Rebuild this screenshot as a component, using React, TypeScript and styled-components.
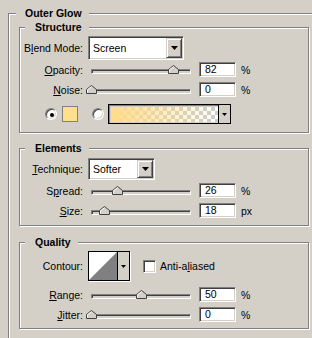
import React from 'react';
import styled, { createGlobalStyle } from 'styled-components';

const Global = createGlobalStyle`
  html, body { margin: 0; padding: 0; background: #d4d0c8; overflow: hidden; }
  body { font-family: "Liberation Sans", Arial, sans-serif; font-size: 10.5px; color: #000; }
  * { box-sizing: border-box; }
`;

const Page = styled.div`
  width: 312px;
  height: 338px;
  overflow: hidden;
  padding: 13px 0 0 8px;
`;

const Group = styled.div<{ $outer?: boolean; $mt?: number }>`
  position: relative;
  border: 1px solid #808080;
  box-shadow: inset 1px 1px #fff, 1px 1px #fff;
  width: ${p => (p.$outer ? 330 : 290)}px;
  min-height: ${p => (p.$outer ? 360 : 0)}px;
  margin-top: ${p => p.$mt ?? 0}px;
  padding: ${p => (p.$outer ? '13px 0 0 10px' : '0')};
  display: flex;
  flex-direction: column;
`;

const Legend = styled.div<{ $outer?: boolean }>`
  position: absolute;
  top: -7px;
  left: ${p => (p.$outer ? 7 : 5)}px;
  padding: 0 7px 0 ${p => (p.$outer ? 9 : 10)}px;
  background: #d4d0c8;
  font-weight: bold;
  line-height: 13px;
  white-space: nowrap;
`;

const Body = styled.div<{ $pt: number; $pb: number }>`
  display: flex;
  flex-direction: column;
  padding: ${p => p.$pt}px 0 ${p => p.$pb}px 0;
`;

const Row = styled.div<{ $h: number; $mt?: number; $pl?: number }>`
  display: flex;
  align-items: center;
  height: ${p => p.$h}px;
  margin-top: ${p => p.$mt ?? 0}px;
  padding-left: ${p => p.$pl ?? 0}px;
`;

const Label = styled.span`
  flex: none;
  width: 63px;
  margin-right: 5px;
  text-align: right;
  white-space: nowrap;
  u { text-decoration: underline; text-underline-offset: 1px; }
`;

const Select = styled.div<{ $w: number; $h: number }>`
  flex: none;
  display: flex;
  width: ${p => p.$w}px;
  height: ${p => p.$h}px;
  padding: 1px;
  background: #fff;
  border: 1px solid;
  border-color: #808080 #fff #fff #808080;
  box-shadow: inset 1px 1px #404040, inset -1px -1px #d4d0c8;
`;

const SelectText = styled.span`
  flex: 1;
  align-self: center;
  padding-left: 3px;
`;

const DropBtn = styled.span`
  flex: none;
  width: 16px;
  display: flex;
  align-items: center;
  justify-content: center;
  background: #d4d0c8;
  border: 1px solid;
  border-color: #d4d0c8 #404040 #404040 #d4d0c8;
  box-shadow: inset 1px 1px #fff, inset -1px -1px #808080;
`;

const Slider = styled.div`
  position: relative;
  flex: none;
  align-self: stretch;
  width: 106px;
  display: flex;
  flex-direction: column;
  justify-content: flex-end;
  padding: 0 3px 3px;
`;

const Track = styled.div`
  height: 5px;
  background: #d4d0c8;
  border: 1px solid;
  border-color: #808080 #fff #fff #808080;
  box-shadow: inset 1px 1px #404040;
`;

const Thumb = styled.svg`
  position: absolute;
  bottom: 3px;
  width: 11px;
  height: 9px;
`;

const Field = styled.div`
  flex: none;
  width: 37px;
  height: 15px;
  margin-left: 5px;
  padding-left: 5px;
  line-height: 13px;
  background: #fff;
  border: 1px solid;
  border-color: #808080 #fff #fff #808080;
  box-shadow: inset 1px 1px #404040, inset -1px -1px #d4d0c8;
`;

const Unit = styled.span`
  margin-left: 5px;
`;

const Radio = styled.span<{ $on?: boolean; $ml?: number }>`
  position: relative;
  flex: none;
  width: 12px;
  height: 12px;
  margin-left: ${p => p.$ml ?? 0}px;
  border-radius: 50%;
  background: #fff;
  border: 1px solid;
  border-color: #808080 #fff #fff #808080;
  box-shadow: inset 1px 1px #404040, inset -1px -1px #d4d0c8;
  &::after {
    content: '';
    display: ${p => (p.$on ? 'block' : 'none')};
    position: absolute;
    left: 4px;
    top: 4px;
    width: 4px;
    height: 4px;
    border-radius: 50%;
    background: #000;
  }
`;

const Swatch = styled.span`
  flex: none;
  width: 16px;
  height: 16px;
  margin-left: 5px;
  background: #ffde8c;
  border: 1px solid #808080;
`;

const Gradient = styled.div`
  flex: none;
  display: flex;
  width: 123px;
  height: 20px;
  margin-left: 4px;
  border: 1px solid #000;
  box-shadow: inset 1px 1px #808080;
`;

const GradFill = styled.div`
  flex: 1;
  margin: 2px 0 1px 2px;
  background:
    linear-gradient(to right, #ffdc87, rgba(255, 222, 140, 0)),
    repeating-conic-gradient(#cccccc 0 25%, #ffffff 0 50%) 0 0 / 8px 8px;
`;

const GradBtn = styled.div`
  flex: none;
  width: 12px;
  display: flex;
  align-items: center;
  justify-content: center;
  background: #d4d0c8;
  border-left: 1px solid #000;
`;

const Contour = styled.div`
  flex: none;
  display: flex;
  width: 42px;
  height: 30px;
  border: 1px solid #000;
  box-shadow: 1px 1px #fff;
  background: #d4d0c8;
`;

const ContourPreview = styled.svg`
  flex: none;
  width: 28px;
  height: 28px;
  display: block;
`;

const ContourBtn = styled.div`
  flex: 1;
  display: flex;
  align-items: center;
  justify-content: center;
  border-left: 1px solid #000;
`;

const Check = styled.span`
  flex: none;
  width: 13px;
  height: 13px;
  margin-left: 13px;
  background: #fff;
  border: 1px solid;
  border-color: #808080 #fff #fff #808080;
  box-shadow: inset 1px 1px #404040, inset -1px -1px #d4d0c8;
`;

const CheckLabel = styled.span`
  margin-left: 4px;
  u { text-decoration: underline; text-underline-offset: 1px; }
`;

const Arrow = () => (
  <svg width="7" height="4" viewBox="0 0 7 4">
    <path d="M0 0h7L3.5 4z" fill="#000" />
  </svg>
);

const SmallArrow = () => (
  <svg width="5" height="3" viewBox="0 0 5 3">
    <path d="M0 0h5L2.5 3z" fill="#000" />
  </svg>
);

type SliderRowProps = {
  label: React.ReactNode;
  pos: number;
  value: string;
  unit: string;
  mt: number;
};

const SliderRow = ({ label, pos, value, unit, mt }: SliderRowProps) => (
  <Row $h={15} $mt={mt}>
    <Label>{label}</Label>
    <Slider>
      <Track />
      <Thumb viewBox="0 0 11 9" style={{ left: 3 + pos - 5 }}>
        <path d="M5.5 0.5 L10.5 4.5 V8.5 H0.5 V4.5 Z" fill="#d4d0c8" stroke="#404040" />
        <path d="M5.5 1.7 L1.5 4.9 V7.5" fill="none" stroke="#fff" />
      </Thumb>
    </Slider>
    <Field>{value}</Field>
    <Unit>{unit}</Unit>
  </Row>
);

export default function App() {
  return (
    <Page>
      <Global />
      <Group $outer>
        <Legend $outer>Outer Glow</Legend>

        <Group>
          <Legend>Structure</Legend>
          <Body $pt={8} $pb={8}>
            <Row $h={24}>
              <Label>B<u>l</u>end Mode:</Label>
              <Select $w={96} $h={24}>
                <SelectText>Screen</SelectText>
                <DropBtn><Arrow /></DropBtn>
              </Select>
            </Row>
            <SliderRow label={<><u>O</u>pacity:</>} pos={82} value="82" unit="%" mt={2} />
            <SliderRow label={<><u>N</u>oise:</>} pos={0} value="0" unit="%" mt={5} />
            <Row $h={20} $mt={7} $pl={25}>
              <Radio $on />
              <Swatch />
              <Radio $ml={14} />
              <Gradient>
                <GradFill />
                <GradBtn><SmallArrow /></GradBtn>
              </Gradient>
            </Row>
          </Body>
        </Group>

        <Group $mt={15}>
          <Legend>Elements</Legend>
          <Body $pt={9} $pb={7}>
            <Row $h={22}>
              <Label><u>T</u>echnique:</Label>
              <Select $w={67} $h={22}>
                <SelectText>Softer</SelectText>
                <DropBtn><Arrow /></DropBtn>
              </Select>
            </Row>
            <SliderRow label={<>S<u>p</u>read:</>} pos={26} value="26" unit="%" mt={3} />
            <SliderRow label={<><u>S</u>ize:</>} pos={13} value="18" unit="px" mt={5} />
          </Body>
        </Group>

        <Group $mt={16}>
          <Legend>Quality</Legend>
          <Body $pt={8} $pb={6}>
            <Row $h={30}>
              <Label>Contour:</Label>
              <Contour>
                <ContourPreview viewBox="0 0 28 28">
                  <rect width="28" height="28" fill="#fff" />
                  <path d="M0 28 L28 0 V28 Z" fill="#808080" />
                </ContourPreview>
                <ContourBtn><SmallArrow /></ContourBtn>
              </Contour>
              <Check />
              <CheckLabel>Anti-a<u>l</u>iased</CheckLabel>
            </Row>
            <SliderRow label={<><u>R</u>ange:</>} pos={50} value="50" unit="%" mt={6} />
            <SliderRow label={<><u>J</u>itter:</>} pos={0} value="0" unit="%" mt={5} />
          </Body>
        </Group>
      </Group>
    </Page>
  );
}
